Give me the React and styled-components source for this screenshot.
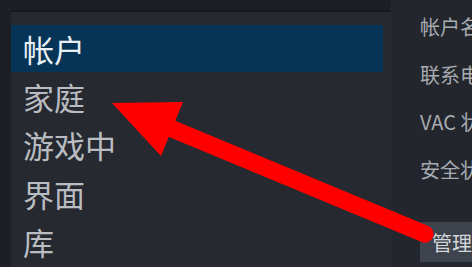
import React from "react";
import styled, { createGlobalStyle } from "styled-components";

const GlobalStyle = createGlobalStyle`
  html, body {
    margin: 0;
    padding: 0;
    background: #1d1f24;
  }
`;

const Screen = styled.div`
  position: relative;
  width: 472px;
  height: 267px;
  overflow: hidden;
  display: flex;
  background: #1d1f24;
  font-family: "Noto Sans CJK SC", "Noto Sans", sans-serif;
`;

const Sidebar = styled.nav`
  margin: 10px 0 0 11px;
  width: 380px;
  flex-shrink: 0;
  border-top: 2px solid #16181c;
  background: #262930;
  padding-top: 13px;
  display: flex;
  flex-direction: column;
`;

const NavItem = styled.div`
  height: ${(p) => (p.$active ? "47px" : "48.5px")};
  margin-right: 8px;
  padding-left: 12px;
  display: flex;
  align-items: center;
  font-size: 31px;
  line-height: 1;
  color: ${(p) => (p.$active ? "#e8eff5" : "#b9bdc1")};
  background: ${(p) => (p.$active ? "#053456" : "transparent")};
  white-space: nowrap;
`;

const Content = styled.section`
  flex: 1;
  background: #23262c;
  padding: 12px 0 0 29px;
  display: flex;
  flex-direction: column;
  overflow: hidden;
`;

const Field = styled.div`
  height: 47.5px;
  font-size: 20px;
  line-height: 30px;
  color: #a8acb1;
  white-space: nowrap;
`;

const ManageButton = styled.div`
  margin-top: 20px;
  height: 40px;
  padding-left: 12px;
  background: #3d434c;
  color: #d3d7db;
  font-size: 20px;
  line-height: 42px;
  white-space: nowrap;
`;

const Overlay = styled.svg`
  position: absolute;
  top: 0;
  left: 0;
  pointer-events: none;
`;

const navItems = ["帐户", "家庭", "游戏中", "界面", "库"];
const fields = ["帐户名称", "联系电子邮件", "VAC 状态", "安全状态"];

export default function App() {
  return (
    <>
      <GlobalStyle />
      <Screen>
        <Sidebar>
          {navItems.map((item, i) => (
            <NavItem key={item} $active={i === 0}>
              {item}
            </NavItem>
          ))}
        </Sidebar>
        <Content>
          {fields.map((f) => (
            <Field key={f}>{f}</Field>
          ))}
          <ManageButton>管理 Steam 令牌</ManageButton>
        </Content>
        <Overlay width="472" height="267" viewBox="0 0 472 267">
          <line
            x1="170"
            y1="128"
            x2="425"
            y2="234"
            stroke="#ff0000"
            strokeWidth="17.5"
            strokeLinecap="round"
          />
          <polygon points="112,103 183,102 161,156" fill="#ff0000" />
        </Overlay>
      </Screen>
    </>
  );
}
